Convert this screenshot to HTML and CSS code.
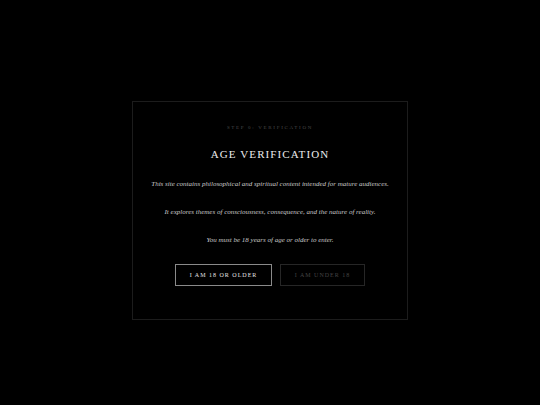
FILE: index.html
```html
<!DOCTYPE html>
<html lang="en">
<head>
<meta charset="utf-8">
<title>Age Verification</title>
<link rel="stylesheet" href="styles.css">
</head>
<body>
<main class="screen">
  <section class="card">
    <div class="step">Step 0: Verification</div>
    <h1 class="title">Age Verification</h1>
    <p class="text first">This site contains philosophical and spiritual content intended for mature audiences.</p>
    <p class="text">It explores themes of consciousness, consequence, and the nature of reality.</p>
    <p class="text">You must be 18 years of age or older to enter.</p>
    <div class="actions">
      <button class="btn btn-primary">I am 18 or older</button>
      <button class="btn btn-secondary">I am under 18</button>
    </div>
  </section>
</main>
</body>
</html>
```
FILE: styles.css
```css
html, body {
  background: #000;
}
body {
  margin: 8px;
  font-family: "Liberation Serif", "Times New Roman", serif;
  color: #ddd;
}
.screen {
  min-height: 100vh;
  display: flex;
  align-items: center;
  justify-content: center;
}
.card {
  box-sizing: border-box;
  width: 276px;
  height: 219px;
  border: 1px solid #1c1c1c;
  background: #000;
  padding: 22px 10px 0;
  display: flex;
  flex-direction: column;
  align-items: center;
  text-align: center;
}
.step {
  font-size: 5px;
  line-height: 8px;
  letter-spacing: 1.7px;
  text-transform: uppercase;
  color: #4a4a4a;
}
.title {
  margin: 15px 0 0;
  font-size: 11px;
  line-height: 14px;
  font-weight: normal;
  letter-spacing: 1.1px;
  text-transform: uppercase;
  color: #ececec;
}
.text {
  margin: 18px 0 0;
  font-size: 7px;
  line-height: 10px;
  font-style: italic;
  color: #c8c8c8;
}
.text.first {
  margin-top: 18px;
}
.actions {
  margin-top: 19px;
  display: flex;
  gap: 8px;
}
.btn {
  box-sizing: border-box;
  height: 22px;
  padding: 0;
  background: transparent;
  font-family: "Liberation Serif", "Times New Roman", serif;
  font-size: 6px;
  letter-spacing: 1px;
  white-space: nowrap;
  text-transform: uppercase;
  cursor: pointer;
}
.btn-primary {
  width: 97px;
  border: 1px solid #8a8a8a;
  color: #e4e4e4;
}
.btn-secondary {
  width: 85px;
  border: 1px solid #262626;
  color: #444;
}
```
